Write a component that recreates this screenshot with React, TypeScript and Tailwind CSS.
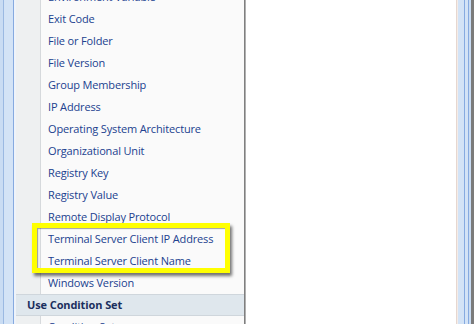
import React from "react";

const items = [
  "Environment Variable",
  "Exit Code",
  "File or Folder",
  "File Version",
  "Group Membership",
  "IP Address",
  "Operating System Architecture",
  "Organizational Unit",
  "Registry Key",
  "Registry Value",
  "Remote Display Protocol",
  "Terminal Server Client IP Address",
  "Terminal Server Client Name",
  "Windows Version",
];

const MenuItem: React.FC<{ label: string }> = ({ label }) => (
  <div className="flex h-[22px] shrink-0">
    <div className="w-[24px] shrink-0 bg-[#eef0f1]" />
    <div className="w-px shrink-0 bg-[#d6d9dc]" />
    <div className="flex items-center pl-[7px] text-[11px] tracking-[-0.15px] text-[#21418f] whitespace-nowrap">
      {label}
    </div>
  </div>
);

const App: React.FC = () => {
  return (
    <div
      className="flex h-[324px] w-[474px] overflow-hidden bg-white"
      style={{ fontFamily: '"Open Sans", "Noto Sans", sans-serif' }}
    >
      {/* left window frame */}
      <div className="flex w-[16px] shrink-0">
        <div className="w-[3px] bg-[#c9dcf3]" />
        <div className="w-px bg-[#9bb9e2]" />
        <div className="w-[9px] bg-[#d3e3f6]" />
        <div className="w-px bg-[#86aae0]" />
        <div className="w-[2px] bg-[#eef3fa]" />
      </div>

      {/* dropdown menu */}
      <div className="relative flex w-[228px] shrink-0 flex-col bg-[#fafafa]">
        <div className="-mt-[14px] flex flex-col">
          {items.map((label) => (
            <MenuItem key={label} label={label} />
          ))}
          <div className="flex h-[22px] shrink-0 items-center border-y border-[#cfd6dc] bg-[#dfe7ed] pl-[11px] text-[11px] font-bold tracking-[-0.1px] text-[#1b2f5e]">
            Use Condition Set
          </div>
          <MenuItem label="Condition Set" />
        </div>

        {/* highlight box */}
        <div className="pointer-events-none absolute left-[16px] top-[223px] h-[50px] w-[198px] border-[5px] border-[#ffff00] shadow-[2px_3px_3px_rgba(0,0,0,0.55),inset_1px_1px_1px_rgba(0,0,0,0.35)]" />
      </div>

      {/* menu right edge */}
      <div className="w-px shrink-0 bg-[#7f7f7f]" />
      <div className="w-px shrink-0 bg-[#b0b0b0]" />

      {/* white content area */}
      <div className="flex-1 bg-white" />

      {/* right window frame */}
      <div className="flex w-[18px] shrink-0">
        <div className="w-px bg-[#e6d7d0]" />
        <div className="w-px bg-[#f4ece8]" />
        <div className="w-[6px] bg-[#d3e3f6]" />
        <div className="w-px bg-[#86aae0]" />
        <div className="w-[3px] bg-[#d3e3f6]" />
        <div className="w-px bg-[#86aae0]" />
        <div className="w-[2px] bg-[#c9dcf3]" />
        <div className="w-[3px] bg-[#7b7b7b]" />
      </div>
    </div>
  );
};

export default App;
